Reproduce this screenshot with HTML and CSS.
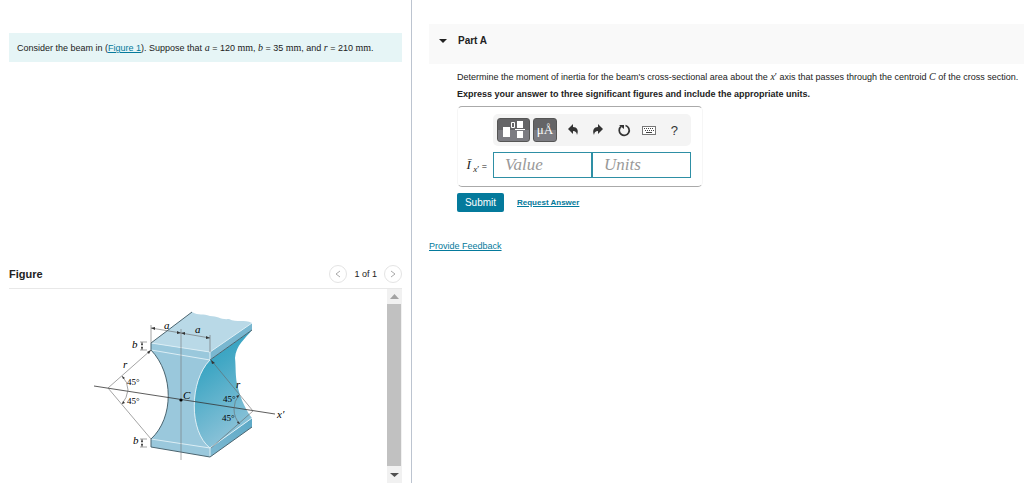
FILE: index.html
```html
<!DOCTYPE html>
<html lang="en">
<head>
    <meta charset="UTF-8">
    <title>Part A</title>
    <link rel="stylesheet" href="styles.css">
</head>
<body>
    <div class="page">
        <div class="left">
            <p class="intro">Consider the beam in (<a href="#figure">Figure 1</a>). Suppose that <i class="math">a</i> = 120 <span class="math">mm</span>, <i class="math">b</i> = 35 <span class="math">mm</span>, and <i class="math">r</i> = 210 <span class="math">mm</span>.</p>

            <div class="figure-panel" id="figure">
                <div class="figure-head">
                    <h2>Figure</h2>
                    <div class="pager">
                        <button type="button" aria-label="Previous figure"><svg width="8" height="8" viewBox="0 0 8 8"><path d="M6 1 2 4 6 7"/></svg></button>
                        <span>1 of 1</span>
                        <button type="button" aria-label="Next figure"><svg width="8" height="8" viewBox="0 0 8 8"><path d="M2 1 6 4 2 7"/></svg></button>
                    </div>
                </div>
                <div class="figure-body">
                    <svg class="beam" width="200" height="160" viewBox="90 305 200 160">
                        <defs>
                            <linearGradient id="web" x1="0" y1="0" x2="0.35" y2="1">
                                <stop offset="0" stop-color="#1f9abb"/>
                                <stop offset="0.4" stop-color="#43a8c5"/>
                                <stop offset="1" stop-color="#8bc2d8"/>
                            </linearGradient>
                            <linearGradient id="flange" x1="0" y1="1" x2="1" y2="0">
                                <stop offset="0" stop-color="#80bad2"/>
                                <stop offset="1" stop-color="#5ba8c6"/>
                            </linearGradient>
                        </defs>
                        <!-- bottom flange, side -->
                        <path d="M210 448 252 418V427L210 457Z" fill="url(#flange)"/>
                        <!-- curved side of the web -->
                        <path d="M210 360 252 330C245 339 236 345 235 358C236 366 235 378 238 388C241 400 247 412 252 418L210 448C189 432 189 381 210 360Z" fill="url(#web)"/>
                        <!-- top face -->
                        <path d="M151 343 192 312C199 316 203 313 210 316C218 316 221 320 229 319C237 323 244 319 252 323L210 352Z" fill="#b9d9e7"/>
                        <path d="M210 352 252 323V330L210 360Z" fill="#79b7d0"/>
                        <!-- front face -->
                        <path d="M151 343 210 352V360C189 381 189 432 210 448V457L151 447V439C174 418 174 374 151 350Z" fill="#9ac8dc"/>
                        <g class="light">
                            <path d="M151 343 210 352 252 323M151 350 210 360C189 381 189 432 210 448L252 418M151 439 210 448V457M210 352V360"/>
                        </g>
                        <g class="edge">
                            <path d="M151 343 192 312M151 350C174 374 174 418 151 439M151 343V350M151 439V447L210 457 252 427M210 360 252 330"/>
                        </g>
                        <path class="center" d="M181 329V460"/>
                        <g class="dim">
                            <path d="M94 386 275 414" class="axis"/>
                            <path d="M151 325V343M151 328 181 333 210 338M210 335V352"/>
                            <path d="M140 342H147M140 350H147M142 342V350M140 439H147M140 447H147M142 439V447"/>
                            <path d="M108 388 151 350M108 388 151 439"/>
                            <path d="M253 411 211 360M253 411 211 448"/>
                            <path d="M122 376Q128 382 128 390Q127 398 122 404M239 395Q234 401 234 409Q234 418 240 424"/>
                        </g>
                        <path class="tip" d="M151 350 147 352 149 354ZM211 360 212 364 215 363ZM151 328 155 327 155 330ZM181 333 177 331 177 334ZM181 333 185 332 185 335ZM210 338 206 336 206 339ZM122 376 123 379 125 378ZM122 404 123 401 125 403ZM239 395 236 396 238 398ZM240 424 238 421 237 423ZM142 342 141 345 143 345ZM142 350 141 347 143 347ZM142 439 141 442 143 442ZM142 447 141 444 143 444Z"/>
                        <circle cx="181" cy="400" r="1.6"/>
                        <g class="label">
                            <text x="164" y="329">a</text>
                            <text x="195" y="333">a</text>
                            <text x="132" y="348">b</text>
                            <text x="133" y="444">b</text>
                            <text x="123" y="368">r</text>
                            <text x="236" y="388">r</text>
                            <text x="183" y="399">C</text>
                            <text x="277" y="418">x′</text>
                        </g>
                        <g class="angle">
                            <text x="127" y="385">45°</text>
                            <text x="127" y="404">45°</text>
                            <text x="223" y="402">45°</text>
                            <text x="222" y="421">45°</text>
                        </g>
                    </svg>
                    <div class="scrollbar">
                        <svg width="15" height="15" viewBox="0 0 15 15"><path d="M3 10 7.5 5 12 10Z" fill="#a3a3a3"/></svg>
                        <div class="thumb"></div>
                        <svg width="15" height="17" viewBox="0 0 15 17"><path d="M3 7 7.5 11 12 7Z" fill="#505050"/></svg>
                    </div>
                </div>
            </div>
        </div>

        <div class="right">
            <div class="part-head">
                <svg width="8" height="4" viewBox="0 0 8 4"><path d="M0 0H8L4 4Z" fill="#222"/></svg>
                <h2>Part A</h2>
            </div>

            <div class="part-body">
                <p>Determine the moment of inertia for the beam's cross-sectional area about the <i class="math">x</i><span class="math">′</span> axis that passes through the centroid <i class="math">C</i> of the cross section.</p>
                <p class="instructions">Express your answer to three significant figures and include the appropriate units.</p>

                <div class="answer">
                    <div class="toolbar">
                        <button type="button" class="dark wide" aria-label="Templates">
                            <svg width="24" height="18" viewBox="0 0 24 18"><path d="M1 6H8V16H1ZM15 0H21V7H15ZM15 10H21V17H15Z" fill="#fff"/><path d="M13 8.500H23M9.500 1.500H12.500V6.500H9.500Z" fill="none" stroke="#fff"/></svg>
                        </button>
                        <button type="button" class="dark" aria-label="Units">μÅ</button>
                        <button type="button" class="tool" aria-label="Undo">
                            <svg width="12" height="12" viewBox="0 0 12 12"><path d="M1 5 6 0V3C10 3 12 6 10 11C9.500 8 8.500 7 6 7V10Z" fill="#333"/></svg>
                        </button>
                        <button type="button" class="tool" aria-label="Redo">
                            <svg width="12" height="12" viewBox="0 0 12 12"><path d="M11 5 6 0V3C2 3 0 6 2 11C2.500 8 3.500 7 6 7V10Z" fill="#333"/></svg>
                        </button>
                        <button type="button" class="tool" aria-label="Reset">
                            <svg width="14" height="14" viewBox="0 0 14 14"><path d="M8.500 2.500A5 5 0 1 1 4 3.500" fill="none" stroke="#333" stroke-width="1.700"/><path d="M2 2H7V6Z" fill="#333"/></svg>
                        </button>
                        <button type="button" class="tool" aria-label="Keyboard shortcuts">
                            <svg width="14" height="10" viewBox="0 0 14 10"><rect x="0.500" y="1.500" width="13" height="8" fill="#fff" stroke="#777"/><path d="M2 3.500H12M3 5.500H12" stroke="#444" stroke-dasharray="1 1"/><path d="M4 7.500H10" stroke="#444"/></svg>
                        </button>
                        <button type="button" class="tool help" aria-label="Help">?</button>
                    </div>
                    <div class="entry">
                        <label for="value"><i>Ī</i> <sub><i>x</i>′</sub> =</label>
                        <input type="text" id="value" placeholder="Value">
                        <input type="text" id="units" placeholder="Units" aria-label="Units">
                    </div>
                </div>

                <div class="actions">
                    <button type="button" class="submit">Submit</button>
                    <a href="#answer">Request Answer</a>
                </div>
            </div>

            <a class="feedback" href="#feedback">Provide Feedback</a>
        </div>
    </div>
</body>
</html>
```
FILE: styles.css
```css
* {
    box-sizing: border-box;
}
body {
    margin: 0;
    font-family: "Liberation Sans", Arial, sans-serif;
    font-size: 9px;
    line-height: 16px;
    color: #222;
    background: #fff;
}
h2, p {
    margin: 0;
}
a {
    color: #047a9c;
}
button {
    font-family: inherit;
    padding: 0;
    border: 0;
}
.page {
    display: grid;
    grid-template-columns: 103fr 153fr;
    min-height: 100vh;
}
.math {
    font-family: "Liberation Serif", serif;
    font-size: 10px;
    line-height: 12px;
}

/* left column */
.left {
    display: flex;
    flex-direction: column;
    justify-content: space-between;
    padding: 33px 9px 0;
    border-right: 1px solid #bcc4d0;
}
.intro {
    padding: 7px 8px 6px;
    background: #e6f5f6;
}
.figure-head {
    display: flex;
    justify-content: space-between;
    align-items: center;
    height: 30px;
    border-bottom: 1px solid #e8e8e8;
}
.figure-head h2 {
    font-size: 11px;
}
.pager {
    display: flex;
    align-items: center;
    gap: 7px;
}
.pager button {
    display: flex;
    align-items: center;
    justify-content: center;
    width: 18px;
    height: 18px;
    border: 1px solid #e4e4e4;
    border-radius: 50%;
    background: #fff;
}
.pager path {
    fill: none;
    stroke: #aaa;
}
.figure-body {
    display: flex;
    justify-content: space-between;
    height: 194px;
}
.beam {
    margin: 16px 0 0 81px;
}
.scrollbar {
    display: flex;
    flex-direction: column;
    width: 15px;
    background: #f1f1f1;
}
.thumb {
    flex: 1;
    margin: 0 1px 0 0;
    background: #c1c1c1;
}

/* beam drawing */
.light {
    fill: none;
    stroke: #dceef5;
}
.edge {
    fill: none;
    stroke: #4c6570;
}
.center {
    stroke: #777;
    stroke-opacity: 0.6;
}
.dim {
    fill: none;
    stroke: #666;
    stroke-width: 0.6;
}
.axis {
    stroke: #333;
    stroke-width: 0.8;
}
.tip {
    fill: #333;
}
.label {
    font: italic 11px "Liberation Serif", serif;
}
.angle {
    font: 9px "Liberation Serif", serif;
}

/* right column */
.right {
    padding: 24px 0 0 17px;
}
.part-head {
    display: flex;
    align-items: center;
    gap: 11px;
    height: 40px;
    padding: 0 10px 6px;
    background: #f9f9f9;
}
.part-head h2 {
    font-size: 10px;
}
.part-body {
    padding: 5px 0 0 28px;
}
.instructions {
    padding-top: 1px;
    font-weight: bold;
}
.answer {
    width: 246px;
    margin: 4px 0 6px;
    padding: 7px 11px 8px 0;
    border: 1px solid #f6f6f6;
    border-top-color: #aaa;
    border-bottom-color: #aaa;
    border-radius: 5px;
}
.toolbar {
    display: flex;
    align-items: center;
    height: 32px;
    margin: 0 0 6px 35px;
    padding: 0 4px;
    border-radius: 5px;
    background: #f4f4f4;
}
.dark {
    display: flex;
    align-items: center;
    justify-content: center;
    width: 24px;
    height: 24px;
    margin-right: 3px;
    border: 1px solid #555;
    border-radius: 3px;
    background: linear-gradient(#646466 50%, #7c7c82 50%);
    color: #fff;
    font: 13px "Liberation Serif", serif;
}
.wide {
    width: 33px;
}
.tool {
    display: flex;
    align-items: center;
    justify-content: center;
    flex: 1;
    height: 24px;
    background: none;
}
.help {
    color: #333;
    font-size: 13px;
}
.entry {
    display: grid;
    grid-template-columns: 35px 1fr 1fr;
    align-items: center;
}
.entry label {
    padding: 0 6px 0 0;
    text-align: right;
    white-space: nowrap;
}
.entry label i {
    font-family: "Liberation Serif", serif;
    font-size: 13px;
}
.entry sub, .entry sub i {
    font-family: "Liberation Serif", serif;
    font-size: 9px;
    line-height: 0;
}
.entry input {
    min-width: 0;
    height: 26px;
    padding: 0 11px;
    border: 1px solid #2e8fa5;
    border-radius: 0;
    font: italic 17px "Liberation Serif", serif;
}
.entry input::placeholder {
    color: #999;
}
.actions {
    display: flex;
    align-items: center;
    gap: 13px;
    font-size: 8px;
    font-weight: bold;
}
.submit {
    width: 47px;
    height: 19px;
    border-radius: 2px;
    background: #047a9c;
    color: #fff;
    font-size: 10px;
}
.feedback {
    display: inline-block;
    margin-top: 26px;
}
```
